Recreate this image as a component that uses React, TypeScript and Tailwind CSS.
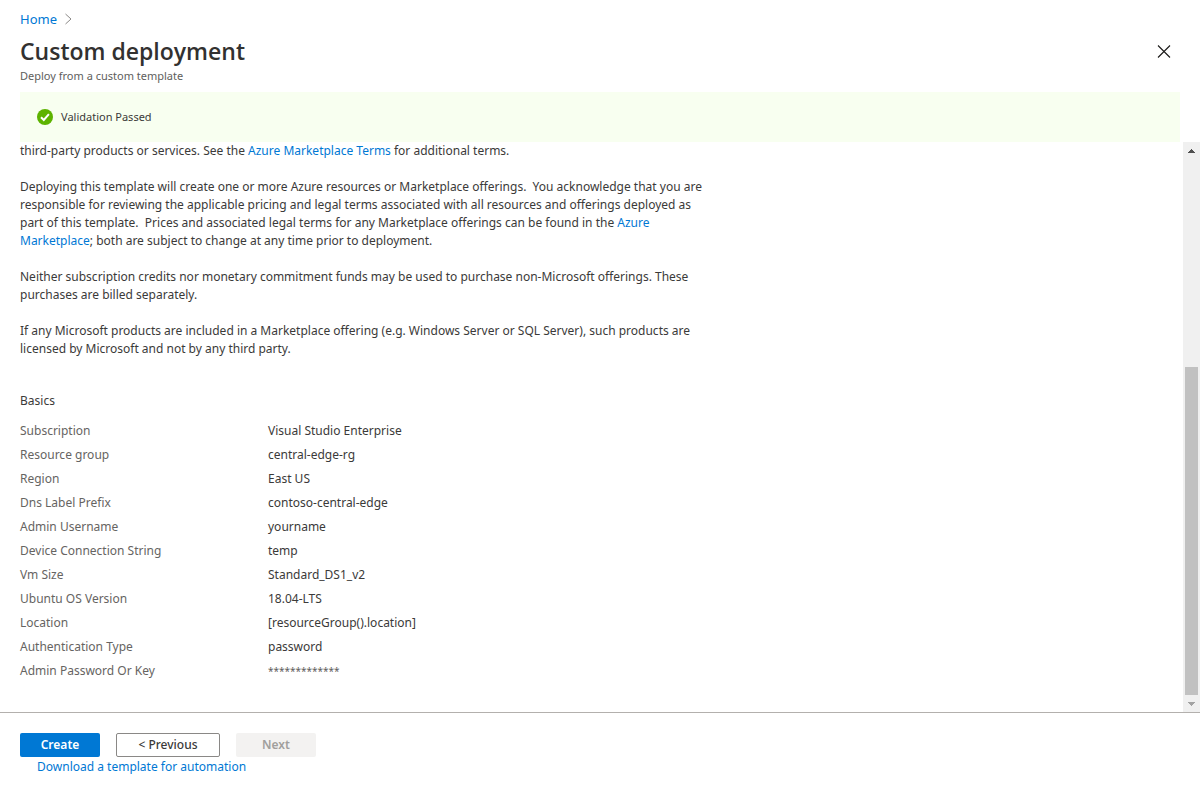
import type { ReactNode } from "react";

const settings: [string, string][] = [
  ["Subscription", "Visual Studio Enterprise"],
  ["Resource group", "central-edge-rg"],
  ["Region", "East US"],
  ["Dns Label Prefix", "contoso-central-edge"],
  ["Admin Username", "yourname"],
  ["Device Connection String", "temp"],
  ["Vm Size", "Standard_DS1_v2"],
  ["Ubuntu OS Version", "18.04-LTS"],
  ["Location", "[resourceGroup().location]"],
  ["Authentication Type", "password"],
  ["Admin Password Or Key", "*************"],
];

function TextLink({ children }: { children: ReactNode }) {
  return (
    <a href="#" className="text-[#0078d4] hover:underline">
      {children}
    </a>
  );
}

function Header() {
  return (
    <header className="px-5 pt-[7px]">
      <nav aria-label="Breadcrumb" className="flex h-6 items-center gap-2 text-[13px]">
        <TextLink>Home</TextLink>
        <svg width="7" height="12" viewBox="0 0 7 12" fill="none" stroke="#8a8886" aria-hidden="true">
          <path d="M0.5 1L6 6L0.5 11" />
        </svg>
      </nav>
      <div className="flex items-center justify-between pr-[5px]">
        <h1 className="font-['Open_Sans',sans-serif] text-[23px] leading-10 font-semibold text-[#323130]">
          Custom deployment
        </h1>
        <button type="button" aria-label="Close" className="p-1">
          <svg width="14" height="14" viewBox="0 0 14 14" fill="none" stroke="#1b1a19" strokeWidth="1.1" aria-hidden="true">
            <path d="M1 1.5L13 13.5M13 1.5L1 13.5" />
          </svg>
        </button>
      </div>
      <p className="-mt-1 text-[11px] leading-[18px] text-[#605e5c]">Deploy from a custom template</p>
    </header>
  );
}

function ValidationBanner() {
  return (
    <div role="status" className="mx-5 mt-[7px] flex h-[50px] shrink-0 items-center gap-2 bg-[#f8fff0] px-[17px] text-[11px]">
      <svg width="16" height="16" viewBox="0 0 16 16" aria-hidden="true">
        <circle cx="8" cy="8" r="8" fill="#5db300" />
        <path d="M4 8.2L6.8 11L11.9 5.2" fill="none" stroke="#fff" strokeWidth="2" />
      </svg>
      <span>Validation Passed</span>
    </div>
  );
}

function Terms() {
  return (
    <section className="flex max-w-[690px] flex-col gap-[18px]">
      <p>
        third-party products or services. See the <TextLink>Azure Marketplace Terms</TextLink> for additional terms.
      </p>
      <p>
        Deploying this template will create one or more Azure resources or Marketplace offerings.&nbsp; You acknowledge
        that you are responsible for reviewing the applicable pricing and legal terms associated with all resources and
        offerings deployed as part of this template.&nbsp; Prices and associated legal terms for any Marketplace
        offerings can be found in the <TextLink>Azure Marketplace</TextLink>; both are subject to change at any time
        prior to deployment.
      </p>
      <p>
        Neither subscription credits nor monetary commitment funds may be used to purchase non-Microsoft offerings.
        These purchases are billed separately.
      </p>
      <p>
        If any Microsoft products are included in a Marketplace offering (e.g. Windows Server or SQL Server), such
        products are licensed by Microsoft and not by any third party.
      </p>
    </section>
  );
}

function Basics() {
  return (
    <section className="mt-[31px]">
      <h2 className="leading-6">Basics</h2>
      <table className="mt-1.5 w-full table-fixed border-collapse text-left">
        <tbody>
          {settings.map(([label, value]) => (
            <tr key={label} className="h-6">
              <th scope="row" className="w-[248px] font-normal text-[#666462]">
                {label}
              </th>
              <td className={value.startsWith("*") ? "text-[10px] text-[#605e5c]" : undefined}>{value}</td>
            </tr>
          ))}
        </tbody>
      </table>
    </section>
  );
}

function ScrollBar() {
  return (
    <div className="flex w-[17px] shrink-0 flex-col items-center bg-[#f0f0f0]">
      <button type="button" aria-label="Scroll up" className="flex h-[17px] w-full items-center justify-center">
        <svg width="7" height="4" viewBox="0 0 7 4" fill="#505050" aria-hidden="true">
          <path d="M0 4V3H1V2H2V1H3V0H4V1H5V2H6V3H7V4Z" />
        </svg>
      </button>
      <div className="flex w-[13px] flex-1 flex-col justify-end">
        <div className="h-[61.2%] bg-[#c1c1c1]" />
      </div>
      <button type="button" aria-label="Scroll down" className="flex h-[17px] w-full items-center justify-center">
        <svg width="7" height="4" viewBox="0 0 7 4" fill="#a3a3a3" aria-hidden="true">
          <path d="M0 0V1H1V2H2V3H3V4H4V3H5V2H6V1H7V0Z" />
        </svg>
      </button>
    </div>
  );
}

function Footer() {
  return (
    <footer className="border-t border-[#b3b0ad] px-5 pt-5 pb-[14px]">
      <div className="flex gap-4">
        <button type="button" className="h-6 w-20 rounded-[2px] bg-[#0078d4] font-semibold text-white">
          Create
        </button>
        <button type="button" className="h-6 w-[104px] rounded-[2px] border border-[#8a8886] font-medium">
          &lt; Previous
        </button>
        <button type="button" disabled className="h-6 w-20 rounded-[2px] bg-[#f3f2f1] font-semibold text-[#a19f9d]">
          Next
        </button>
      </div>
      <div className="pl-[17px] leading-5">
        <TextLink>Download a template for automation</TextLink>
      </div>
    </footer>
  );
}

export default function App() {
  return (
    <div className="flex min-h-screen flex-col bg-white font-['Noto_Sans',sans-serif] text-[12px] leading-[18px] text-[#3b3a39]">
      <Header />
      <ValidationBanner />
      <div className="flex flex-1">
        <main className="min-w-0 flex-1 px-5 pb-6">
          <Terms />
          <Basics />
        </main>
        <ScrollBar />
      </div>
      <Footer />
    </div>
  );
}
